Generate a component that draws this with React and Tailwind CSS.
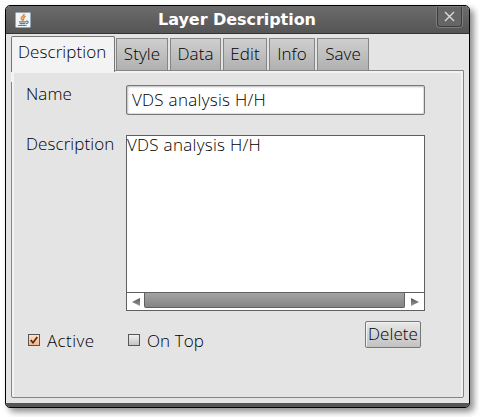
import React from "react";

const tabs = [
  { label: "Style", box: "w-[52px]" },
  { label: "Data", box: "w-[51px]" },
  { label: "Edit", box: "w-[44px]" },
  { label: "Info", box: "w-[46px]" },
  { label: "Save", box: "w-[52px]" },
];

function JavaIcon() {
  return (
    <svg width="16" height="16" viewBox="0 0 16 16" fill="none">
      <rect x="0.5" y="0.5" width="15" height="15" rx="1" fill="#f2f4f5" stroke="#8fa9bb" />
      <path d="M9.2 1.8C9.2 4 5.8 4.8 6.3 6.5L7.6 8.6M10.6 4C7.6 5.3 8.7 6.6 8.3 8.6" stroke="#e58a3c" strokeWidth="1.5" />
      <path d="M4 9.8H11M4.6 11.6H10.4M3 13.5H11.5M11 9.3C14 8.6 13.4 11.4 11 11.6" stroke="#5b8096" strokeWidth="1.2" />
    </svg>
  );
}

function Arrow({ d }) {
  return (
    <svg width="8" height="8" viewBox="0 0 8 8">
      <defs>
        <linearGradient id="arrow" x1="0" y1="0" x2="0" y2="1">
          <stop stopColor="#555" />
          <stop offset="1" stopColor="#999" />
        </linearGradient>
      </defs>
      <path d={d} fill="url(#arrow)" />
    </svg>
  );
}

function TitleBar() {
  return (
    <div className="flex h-[28px] shrink-0 items-start border-b border-[#333] bg-linear-to-b from-[#6c6c6c] to-[#555] pl-[9px] pr-[7px]">
      <div className="mt-[6px]"><JavaIcon /></div>
      <div className="flex-1 pl-[6px] text-center font-['DejaVu_Sans',sans-serif] text-[16px] leading-[28px] font-bold tracking-[-0.05px] text-white">
        Layer Description
      </div>
      <div className="mt-px flex h-[20px] w-[25px] items-center justify-center rounded-b-[3px] border border-t-0 border-[#3c3c3c] bg-[#666] shadow-[0_0_0_1px_#7c7c7c]">
        <svg width="11" height="11" viewBox="0 0 11 11"><path d="M1 1L10 10M10 1L1 10" stroke="#dcdcdc" strokeWidth="1.4" /></svg>
      </div>
    </div>
  );
}

function CheckBox({ checked, label }) {
  return (
    <div className="flex h-[22px] items-center gap-[7px]">
      <span className={checked
        ? "flex size-[12px] items-center justify-center border border-[#555] bg-linear-to-b from-[#ffe3c4] to-[#f5b487]"
        : "size-[12px] border border-[#555] bg-linear-to-b from-[#f0f0f0] to-[#c4c4c4]"}>
        {checked && <svg width="8" height="8" viewBox="0 0 8 8"><path d="M0.7 4L3 6.7L7.3 1" fill="none" stroke="#512717" strokeWidth="1.7" /></svg>}
      </span>
      <span className="pt-[2px]">{label}</span>
    </div>
  );
}

export default function App() {
  return (
    <div className="h-[417px] w-[479px] overflow-hidden bg-white pl-[5px] pt-[5px] font-['Open_Sans',sans-serif] text-[17px] leading-[20px] font-light tracking-[0.08px] whitespace-nowrap text-black">
      <div className="flex h-[403px] w-[465px] flex-col overflow-hidden rounded-[5px] border border-black bg-[#e4e4e4] shadow-[4px_4px_6px_#00000070]">
        <TitleBar />
        <div className="flex h-[369px] flex-col px-[5px] pt-[2px]">
          <div className="flex h-[34px] items-end">
            <div className="relative z-10 -mb-[2px] mr-px h-[36px] w-[104px] rounded-t-[2px] border border-b-0 border-[#777] bg-[#f3f3f3] pl-[6px] pt-[5px]">Description</div>
            <div className="flex h-[32px] gap-[2px]">
              {tabs.map((t) => (
                <div key={t.label} className={t.box + " border border-b-0 border-[#858585] bg-linear-to-b from-[#cfcfcf] to-[#b0b0b0] pt-[5px] text-center"}>{t.label}</div>
              ))}
            </div>
          </div>
          <div className="relative h-[328px] w-[453px] rounded-b-[2px] border border-[#858585] pl-[14px] pt-[13px] shadow-[inset_2px_2px_0_#f3f3f3,inset_-2px_0_0_#f0f0f0]">
            <div className="absolute -left-px top-0 h-[11px] w-px bg-[#f3f3f3]" />
            <div className="flex h-[50px]">
              <span className="w-[100px] shrink-0">Name</span>
              <div className="mt-px h-[30px] w-[299px] rounded-[2px] border border-[#777] bg-white pl-[5px] pt-[4px] tracking-[0.28px] shadow-[inset_1px_1px_2px_#bbb,inset_-1px_-1px_1px_#ddd]">VDS analysis H/H</div>
            </div>
            <div className="flex h-[177px]">
              <span className="w-[100px] shrink-0">Description</span>
              <div className="mt-px flex w-[299px] flex-col border border-[#606060] bg-white">
                <div className="-mt-px h-[157px] shrink-0 tracking-[0.28px]">VDS analysis H/H</div>
                <div className="flex h-[18px] border-t border-[#606060]">
                  <div className="flex w-[17px] items-center justify-center"><Arrow d="M8 0V8L0 4Z" /></div>
                  <div className="h-[15px] w-[261px] rounded-b-[2px] border border-t-0 border-[#606060] bg-linear-to-b from-[#a3a3a3] to-[#858585]" />
                  <div className="flex flex-1 items-center justify-center pl-px"><Arrow d="M0 0V8L8 4Z" /></div>
                </div>
              </div>
            </div>
            <div className="flex pl-[2px] pt-[10px]">
              <div className="mt-[8px] w-[100px] tracking-[0.4px]"><CheckBox checked label="Active" /></div>
              <div className="mt-[8px] w-[237px]"><CheckBox label="On Top" /></div>
              <button className="h-[27px] w-[56px] rounded-[2px] border border-[#777] bg-linear-to-b from-[#e8e8e8] to-[#c2c2c2] pb-px text-center font-light shadow-[inset_1px_1px_0_#f4f4f4]">Delete</button>
            </div>
          </div>
        </div>
        <div className="h-[4px] shrink-0 bg-[#555]" />
      </div>
    </div>
  );
}
